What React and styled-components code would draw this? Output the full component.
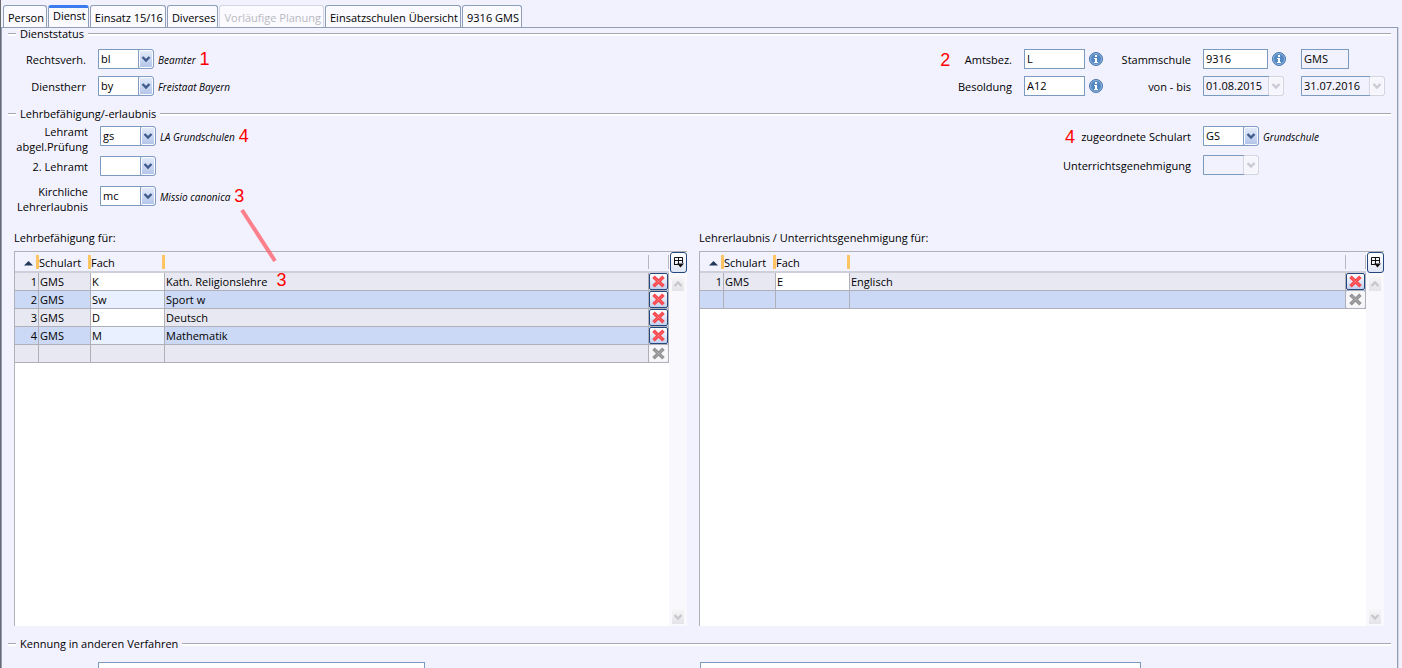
/* eslint-disable react/prop-types */
import React from "react";
import styled, { createGlobalStyle, css } from "styled-components";

const GlobalStyle = createGlobalStyle`
  * {
    box-sizing: border-box;
  }

  body {
    margin: 0;
    background: #f2f2ff;
    color: #000;
    font: 11px/15px "Open Sans", "Noto Sans", sans-serif;
  }

  button,
  input,
  select {
    font: inherit;
    color: inherit;
    margin: 0;
  }
`;

const Window = styled.div`
  height: 100vh;
  overflow: hidden;
  display: flex;
  flex-direction: column;
  border-left: 1px solid #6a6a6e;
`;

const TabBar = styled.nav`
  display: flex;
  align-items: flex-end;
  gap: 1px;
  height: 27px;
  padding-left: 2px;
  flex: none;
`;

const Tab = styled.button`
  height: 22px;
  padding: 2px 2px 0 4px;
  border: 1px solid #8f9fb9;
  border-bottom: none;
  border-radius: 3px 3px 0 0;
  background: #fafaff;
  white-space: nowrap;

  &:disabled {
    color: #b9b9c0;
    border-color: #d3d6e2;
  }

  ${({ $active }) =>
    $active &&
    css`
      padding: 0 2px 4px 4px;
      border-top: 3px solid #3c7cf0;
    `}
`;

const Panel = styled.main`
  flex: 1;
  margin-right: 4px;
  border: solid #8f9fb9;
  border-width: 1px 1px 0;
  box-shadow: 1px 0 0 #d5d5e3;
`;

const Section = styled.section`
  padding: 0 6px;
`;

const SectionTitle = styled.h2`
  display: flex;
  align-items: center;
  gap: 4px;
  margin: 0;
  font-size: 11px;
  font-weight: 400;
  line-height: 12px;
  white-space: nowrap;

  &::before,
  &::after {
    content: "";
    height: 2px;
    width: 8px;
    border-top: 1px solid #a8a8b0;
    background: #fff;
  }

  &::after {
    flex: 1;
  }
`;

const SectionBody = styled.div`
  display: flex;
  justify-content: space-between;
  padding: ${({ $padding }) => $padding};
`;

const LeftFields = styled.div`
  display: grid;
  grid-template-columns: 76px auto;
  grid-auto-rows: ${({ $row }) => $row};
  column-gap: 12px;
`;

const StatusGrid = styled.div`
  display: grid;
  grid-template-columns: auto 79px 76px 86px 85px;
  grid-auto-rows: 27px;
  column-gap: 12px;
`;

const RightFields = styled.div`
  display: grid;
  grid-template-columns: auto 183px;
  grid-auto-rows: 29px;
  column-gap: 12px;
`;

const Label = styled.label`
  display: flex;
  justify-content: flex-end;
  gap: 6px;
  padding-top: ${({ $lines }) => ($lines === 2 ? "0" : "3px")};
  margin-top: ${({ $lines }) => ($lines === 2 ? "-2px" : "0")};
  text-align: right;
  white-space: pre-line;
`;

const Control = styled.div`
  display: flex;
  align-items: center;
  gap: 4px;
  height: 20px;
`;

const TextInput = styled.input`
  height: 20px;
  width: ${({ $width }) => $width};
  padding: 0 2px 1px;
  border: 1px solid #7a9abf;
  border-radius: 0;
  background: ${({ readOnly }) => (readOnly ? "transparent" : "#fff")};
`;

const ComboBox = styled.div`
  position: relative;
  flex: none;
  width: ${({ $width }) => $width};
  height: 20px;
`;

const Select = styled.select`
  appearance: none;
  width: 100%;
  height: 20px;
  padding: 0 16px 2px 2px;
  border: 1px solid #7a9abf;
  border-radius: 0 4px 4px 0;
  background: #fff;

  &:disabled {
    background: transparent;
    color: #000;
    opacity: 1;
  }
`;

const ComboArrow = styled.span`
  position: absolute;
  top: 0;
  right: 0;
  display: flex;
  align-items: center;
  justify-content: center;
  width: 16px;
  height: 20px;
  border: 1px solid ${({ $disabled }) => ($disabled ? "#d2d4df" : "#839cc4")};
  border-radius: 2px 3px 3px 2px;
  background: ${({ $disabled }) =>
    $disabled ? "#f5f5fb" : "linear-gradient(#e6edfb, #b0c3e9)"};
  box-shadow: inset 0 0 0 1px #fafbff;
  color: ${({ $disabled }) => ($disabled ? "#c9cad3" : "#3f5a8c")};
  pointer-events: none;
`;

const Hint = styled.em`
  padding-top: 2px;
  font-size: 10px;
  white-space: nowrap;
`;

const Mark = styled.span`
  color: #f00;
  font: 18px/16px "Liberation Sans", Arial, sans-serif;
  margin-left: ${({ $gap }) => $gap || "0"};
`;

const RowMark = styled(Mark)`
  line-height: 0;
`;

const InfoButton = styled.button`
  display: flex;
  padding: 0;
  border: none;
  background: none;
`;

const Tables = styled.div`
  display: grid;
  grid-template-columns: 673fr 685fr;
  gap: 12px;
  padding: 0 7px 0 6px;
  margin-bottom: 12px;
`;

const TableTitle = styled.h3`
  margin: 0 0 6px;
  font-size: 11px;
  font-weight: 400;
  line-height: 15px;
`;

const TableFrame = styled.div`
  display: flex;
  min-height: 375px;
  border: solid #b0b0b8;
  border-width: 1px 0 0 1px;
  background: #fff;
`;

const TableArea = styled.div`
  position: relative;
  flex: 1;
`;

const Table = styled.table`
  width: 100%;
  table-layout: fixed;
  border-collapse: separate;
  border-spacing: 0;
  line-height: 15px;
`;

const HeadCell = styled.th`
  height: 21px;
  width: ${({ $width }) => $width || "auto"};
  padding: 2px 0 0;
  border-bottom: 2px solid #cfcfd9;
  background: #f2f2ff
    linear-gradient(${({ $grip }) => ($grip ? "#fdc464, #fdc464" : "#b8b8c0, #b8b8c0")})
    no-repeat right 0 top 3px / ${({ $grip }) => ($grip ? "3px" : "1px")} 14px;
  font-weight: 400;
  text-align: left;
  vertical-align: middle;
`;

const SortCell = styled(HeadCell)`
  padding: 0 0 0 9px;
`;

const Row = styled.tr`
  background: ${({ $blue }) => ($blue ? "#cbd9f6" : "#e8e8f2")};
`;

const Cell = styled.td`
  height: 18px;
  padding: 0 1px;
  border: solid #b0b0b8;
  border-width: 0 1px 1px 0;
  text-align: ${({ $align }) => $align || "left"};
  white-space: nowrap;
  ${({ $editable, $blue }) =>
    $editable && `background: ${$blue ? "#e9f0ff" : "#fff"};`}
`;

const DeleteCell = styled(Cell)`
  padding: 0;
  line-height: 0;
`;

const DeleteButton = styled.button`
  display: flex;
  align-items: center;
  justify-content: center;
  width: 100%;
  height: 17px;
  padding: 0;
  border: 1px solid #24477e;
  border-radius: 2px;
  background: linear-gradient(#fff, #c3d0ee);
  color: #f8474c;

  &:disabled {
    border-color: #f4f4f8;
    background: #f7f7fa;
    color: #939396;
  }
`;

const ScrollColumn = styled.div`
  display: flex;
  flex-direction: column;
  align-items: center;
  width: 18px;
  background: #f9f9fd;
  padding-bottom: 2px;
`;

const ColumnButton = styled.button`
  display: flex;
  align-items: center;
  justify-content: center;
  width: 17px;
  height: 21px;
  padding: 0;
  border: 1px solid #24477e;
  border-radius: 3px;
  background: linear-gradient(#fff, #dfe5f4);
`;

const ScrollButton = styled.button`
  display: flex;
  align-items: center;
  justify-content: center;
  width: 12px;
  height: 15px;
  margin-top: ${({ $bottom }) => ($bottom ? "auto" : "3px")};
  padding: 0;
  border: none;
  background: linear-gradient(#f7f7f9, #e4e4e8);
  color: #c8c8cc;
`;

const IdFields = styled.div`
  display: grid;
  grid-template-columns: 327px 441px;
  gap: 275px;
  padding: 12px 0 0 90px;
`;

const Chevron = ({ up }) => (
  <svg width="10" height="8" viewBox="0 0 10 8" fill="none">
    <path
      d={up ? "M1.5 6 5 2.5 8.5 6" : "M1.5 2 5 5.5 8.5 2"}
      stroke="currentColor"
      strokeWidth="2.4"
    />
  </svg>
);

const Cross = () => (
  <svg width="15" height="13" viewBox="0 0 15 13" fill="none">
    <path
      d="M2.5 1.8 12.5 11.2M12.5 1.8 2.5 11.2"
      stroke="currentColor"
      strokeWidth="3.6"
    />
    <path
      d="M3.5 2.8 11.5 10.2M11.5 2.8 3.5 10.2"
      stroke="#fff"
      strokeOpacity="0.2"
      strokeWidth="1"
    />
  </svg>
);

const SortArrow = () => (
  <svg width="9" height="5" viewBox="0 0 9 5">
    <path d="M0 4.5 4.5 0 9 4.5z" fill="#23395b" />
  </svg>
);

const ColumnIcon = () => (
  <svg width="11" height="11" viewBox="0 0 11 11" fill="none">
    <path d="M1.5 8V.5h8V6M1.5 3.5h8M5.5 1v6M1 7.5h4" stroke="#111" />
    <path d="M4 6.5h7L7.5 10.5z" fill="#111" />
  </svg>
);

const Info = ({ label }) => (
  <InfoButton type="button" aria-label={label}>
    <svg width="14" height="14" viewBox="0 0 14 14">
      <circle cx="7" cy="7" r="6.5" fill="#5488c2" stroke="#4a76ac" />
      <circle cx="7" cy="7" r="5.5" fill="none" stroke="#8fb3dc" />
      <path d="M6 3h2v2H6zM6 6h2v4h1v1H5v-1h1V7H5V6z" fill="#fff" />
    </svg>
  </InfoButton>
);

const Combo = ({ id, value = "", width = "56px", disabled, label }) => (
  <ComboBox $width={width}>
    <Select id={id} defaultValue={value} disabled={disabled} aria-label={label}>
      <option value={value}>{value}</option>
    </Select>
    <ComboArrow $disabled={disabled}>
      <Chevron />
    </ComboArrow>
  </ComboBox>
);

const SubjectTable = ({ title, rows, lastBlue, children }) => (
  <div>
    <TableTitle>{title}</TableTitle>
    <TableFrame>
      <TableArea>
        <Table aria-label={title}>
          <thead>
            <tr>
              <SortCell $width="24px" $grip aria-label="Nr.">
                <SortArrow />
              </SortCell>
              <HeadCell $width="52px" $grip>
                Schulart
              </HeadCell>
              <HeadCell $width="74px" $grip>
                Fach
              </HeadCell>
              <HeadCell aria-label="Bezeichnung" />
              <HeadCell $width="20px" aria-label="Entfernen" />
            </tr>
          </thead>
          <tbody>
            {rows.map((row, i) => {
              const blue = i % 2 === 1;
              return (
                <Row key={row.fach} $blue={blue}>
                  <Cell $align="right">{i + 1}</Cell>
                  <Cell>GMS</Cell>
                  <Cell $editable $blue={blue}>
                    {row.fach}
                  </Cell>
                  <Cell>
                    {row.name}
                    {row.mark && <RowMark $gap="9px">{row.mark}</RowMark>}
                  </Cell>
                  <DeleteCell>
                    <DeleteButton type="button" aria-label="Zeile entfernen">
                      <Cross />
                    </DeleteButton>
                  </DeleteCell>
                </Row>
              );
            })}
            <Row $blue={lastBlue}>
              <Cell />
              <Cell />
              <Cell />
              <Cell />
              <DeleteCell>
                <DeleteButton
                  type="button"
                  disabled
                  aria-label="Zeile entfernen"
                >
                  <Cross />
                </DeleteButton>
              </DeleteCell>
            </Row>
          </tbody>
        </Table>
        {children}
      </TableArea>
      <ScrollColumn>
        <ColumnButton type="button" aria-label="Spalten">
          <ColumnIcon />
        </ColumnButton>
        <ScrollButton type="button" aria-label="Nach oben">
          <Chevron up />
        </ScrollButton>
        <ScrollButton type="button" $bottom aria-label="Nach unten">
          <Chevron />
        </ScrollButton>
      </ScrollColumn>
    </TableFrame>
  </div>
);

// red pointer from the "Missio canonica" mark down to the table row
const Pointer = styled.svg`
  position: absolute;
  left: 224px;
  top: -44px;
  pointer-events: none;
`;

const tabs = [
  { name: "Person" },
  { name: "Dienst", active: true },
  { name: "Einsatz 15/16" },
  { name: "Diverses" },
  { name: "Vorläufige Planung", disabled: true },
  { name: "Einsatzschulen Übersicht" },
  { name: "9316 GMS" },
];

const qualifications = [
  { fach: "K", name: "Kath. Religionslehre", mark: "3" },
  { fach: "Sw", name: "Sport w" },
  { fach: "D", name: "Deutsch" },
  { fach: "M", name: "Mathematik" },
];

const permissions = [{ fach: "E", name: "Englisch" }];

const App = () => {
  return (
    <>
      <GlobalStyle />
      <Window>
        <TabBar>
          {tabs.map(({ name, active, disabled }) => (
            <Tab key={name} type="button" $active={active} disabled={disabled}>
              {name}
            </Tab>
          ))}
        </TabBar>
        <Panel>
          <Section>
            <SectionTitle>Dienststatus</SectionTitle>
            <SectionBody $padding="9px 5px 5px 2px">
              <LeftFields $row="27px">
                <Label htmlFor="rechtsverh">Rechtsverh.</Label>
                <Control>
                  <Combo id="rechtsverh" value="bl" />
                  <Hint>Beamter</Hint>
                  <Mark>1</Mark>
                </Control>
                <Label htmlFor="dienstherr">Dienstherr</Label>
                <Control>
                  <Combo id="dienstherr" value="by" />
                  <Hint>Freistaat Bayern</Hint>
                </Control>
              </LeftFields>
              <StatusGrid>
                <Label htmlFor="amtsbez">
                  <Mark $gap="-20px">2</Mark>
                  <span>&nbsp;&nbsp; Amtsbez.</span>
                </Label>
                <Control>
                  <TextInput id="amtsbez" defaultValue="L" $width="61px" />
                  <Info label="Info Amtsbezeichnung" />
                </Control>
                <Label htmlFor="stammschule">Stammschule</Label>
                <Control>
                  <TextInput
                    id="stammschule"
                    defaultValue="9316"
                    $width="65px"
                  />
                  <Info label="Info Stammschule" />
                </Control>
                <Control>
                  <TextInput
                    aria-label="Schulart"
                    defaultValue="GMS"
                    readOnly
                    $width="48px"
                  />
                </Control>
                <Label htmlFor="besoldung">Besoldung</Label>
                <Control>
                  <TextInput id="besoldung" defaultValue="A12" $width="61px" />
                  <Info label="Info Besoldung" />
                </Control>
                <Label htmlFor="von">von - bis</Label>
                <Combo id="von" value="01.08.2015" width="81px" disabled />
                <Combo label="bis" value="31.07.2016" width="84px" disabled />
              </StatusGrid>
            </SectionBody>
          </Section>
          <Section>
            <SectionTitle>Lehrbefähigung/-erlaubnis</SectionTitle>
            <SectionBody $padding="6px 5px 14px 4px">
              <LeftFields $row="30px">
                <Label htmlFor="lehramt" $lines={2}>
                  {"Lehramt\nabgel.Prüfung"}
                </Label>
                <Control>
                  <Combo id="lehramt" value="gs" />
                  <Hint>LA Grundschulen</Hint>
                  <Mark>4</Mark>
                </Control>
                <Label htmlFor="lehramt2">2. Lehramt</Label>
                <Control>
                  <Combo id="lehramt2" />
                </Control>
                <Label htmlFor="erlaubnis" $lines={2}>
                  {"Kirchliche\nLehrerlaubnis"}
                </Label>
                <Control>
                  <Combo id="erlaubnis" value="mc" />
                  <Hint>Missio canonica</Hint>
                  <Mark>3</Mark>
                </Control>
              </LeftFields>
              <RightFields>
                <Label htmlFor="schulart">
                  <Mark>4</Mark>
                  <span>zugeordnete Schulart</span>
                </Label>
                <Control>
                  <Combo id="schulart" value="GS" />
                  <Hint>Grundschule</Hint>
                </Control>
                <Label htmlFor="genehmigung">Unterrichtsgenehmigung</Label>
                <Control>
                  <Combo id="genehmigung" disabled />
                </Control>
              </RightFields>
            </SectionBody>
            <Tables>
              <SubjectTable title="Lehrbefähigung für:" rows={qualifications}>
                <Pointer width="40" height="56" viewBox="0 0 40 56">
                  <path
                    d="M3 2 36 53"
                    stroke="#ff5a64"
                    strokeOpacity="0.75"
                    strokeWidth="4"
                  />
                </Pointer>
              </SubjectTable>
              <SubjectTable
                title="Lehrerlaubnis / Unterrichtsgenehmigung für:"
                rows={permissions}
                lastBlue
              />
            </Tables>
          </Section>
          <Section>
            <SectionTitle>Kennung in anderen Verfahren</SectionTitle>
            <IdFields>
              <TextInput aria-label="Kennung 1" $width="100%" />
              <TextInput aria-label="Kennung 2" $width="100%" />
            </IdFields>
          </Section>
        </Panel>
      </Window>
    </>
  );
};

export default App;
